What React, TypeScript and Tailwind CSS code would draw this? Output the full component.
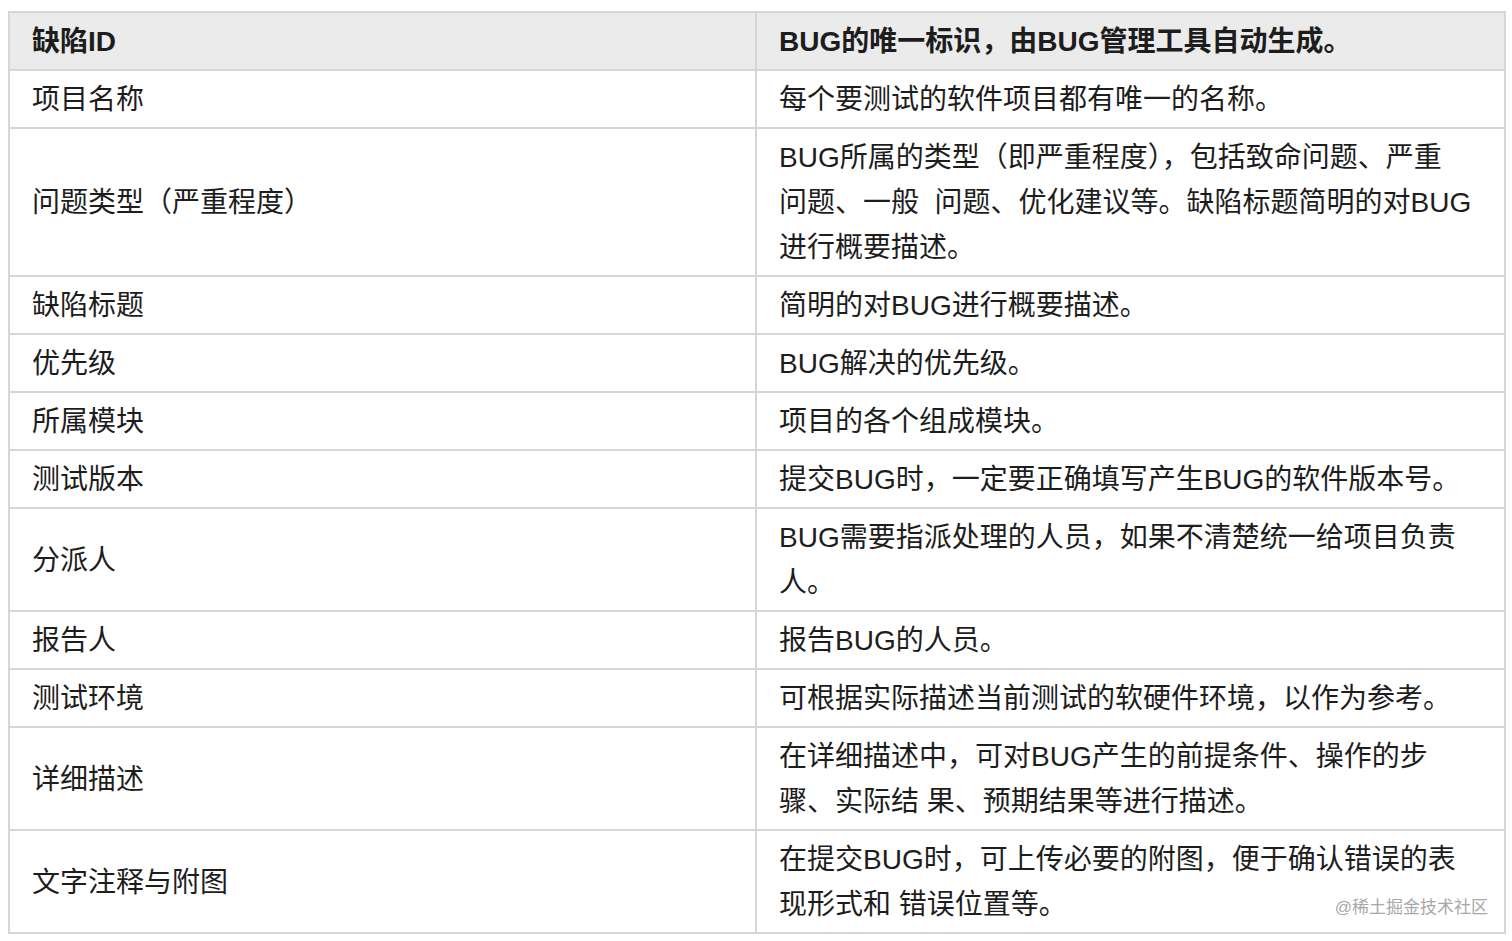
const rows: { k: string; v: string[] }[] = [
  { k: '项目名称', v: ['每个要测试的软件项目都有唯一的名称。'] },
  {
    k: '问题类型（严重程度）',
    v: ['BUG所属的类型（即严重程度），包括致命问题、严重', '问题、一般  问题、优化建议等。缺陷标题简明的对BUG', '进行概要描述。'],
  },
  { k: '缺陷标题', v: ['简明的对BUG进行概要描述。'] },
  { k: '优先级', v: ['BUG解决的优先级。'] },
  { k: '所属模块', v: ['项目的各个组成模块。'] },
  { k: '测试版本', v: ['提交BUG时，一定要正确填写产生BUG的软件版本号。'] },
  { k: '分派人', v: ['BUG需要指派处理的人员，如果不清楚统一给项目负责', '人。'] },
  { k: '报告人', v: ['报告BUG的人员。'] },
  { k: '测试环境', v: ['可根据实际描述当前测试的软硬件环境，以作为参考。'] },
  { k: '详细描述', v: ['在详细描述中，可对BUG产生的前提条件、操作的步', '骤、实际结 果、预期结果等进行描述。'] },
  { k: '文字注释与附图', v: ['在提交BUG时，可上传必要的附图，便于确认错误的表', '现形式和 错误位置等。'] },
];

export default function App() {
  return (
    <div className="min-h-screen bg-white pl-[8px] pt-[11px] font-['Liberation_Sans','Noto_Sans_CJK_SC',sans-serif] text-[#1d1d1d]">
      <div className="relative w-[1496px]">
        <table className="w-full table-fixed border-collapse text-[28px] leading-[45px]">
          <colgroup>
            <col className="w-[747px]" />
            <col className="w-[749px]" />
          </colgroup>
          <thead>
            <tr className="bg-[#ebebeb]">
              <th className="border-2 border-[#d6d6d6] px-[22px] pt-[6px] pb-[5px] text-left font-semibold">缺陷ID</th>
              <th className="border-2 border-[#d6d6d6] px-[22px] pt-[6px] pb-[5px] text-left font-semibold">
                BUG的唯一标识，由BUG管理工具自动生成。
              </th>
            </tr>
          </thead>
          <tbody>
            {rows.map((r) => (
              <tr key={r.k}>
                <td className="border-2 border-[#d6d6d6] px-[22px] pt-[6px] pb-[5px] align-middle">{r.k}</td>
                <td className="whitespace-pre border-2 border-[#d6d6d6] px-[22px] pt-[6px] pb-[5px] align-middle">
                  {r.v.map((line, i) => (
                    <div key={i}>{line}</div>
                  ))}
                </td>
              </tr>
            ))}
          </tbody>
        </table>
        <div className="absolute bottom-[18px] right-[16px] text-[17px] leading-none text-[#a8a8a8]">@稀土掘金技术社区</div>
      </div>
    </div>
  );
}
